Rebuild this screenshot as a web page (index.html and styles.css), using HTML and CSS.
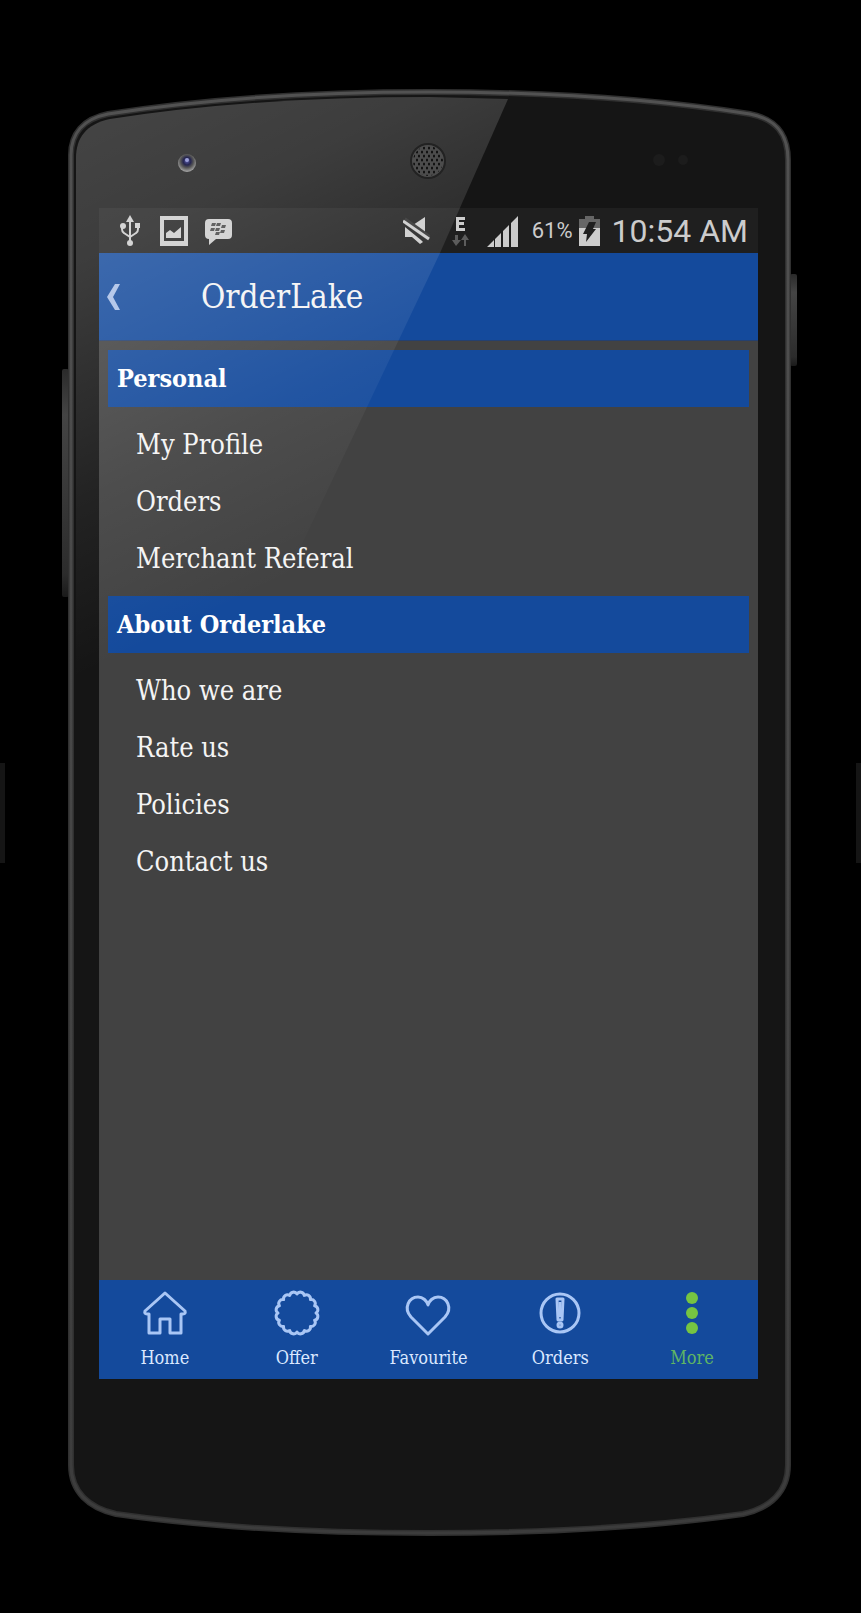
FILE: index.html
```html
<!DOCTYPE html>
<html lang="en">
<head>
    <meta charset="UTF-8">
    <meta name="viewport" content="width=device-width, initial-scale=1">
    <title>OrderLake</title>
    <link rel="stylesheet" href="styles.css">
</head>
<body>
<span class="edge edge-left"></span>
<span class="edge edge-right"></span>
<div class="device">
    <!-- phone body -->
    <svg class="body" viewBox="0 0 723 1446" preserveAspectRatio="none" aria-hidden="true">
        <defs>
            <linearGradient id="rim" x1="0" y1="0" x2="0" y2="1">
                <stop offset="0" stop-color="#525252"/>
                <stop offset="0.5" stop-color="#464646"/>
                <stop offset="1" stop-color="#3c3c3c"/>
            </linearGradient>
            <linearGradient id="key" x1="0" y1="0" x2="0" y2="1">
                <stop offset="0" stop-color="#2a2a2a"/>
                <stop offset="0.2" stop-color="#444"/>
                <stop offset="0.9" stop-color="#2c2c2c"/>
                <stop offset="1" stop-color="#1a1a1a"/>
            </linearGradient>
        </defs>
        <rect x="-6" y="279" width="7" height="228" rx="2" fill="url(#key)"/>
        <rect x="722" y="184" width="7" height="92" rx="2" fill="url(#key)"/>
        <path d="M3 65C3 44 15 29 40 24Q180 2 361 2T682 24C708 29 720 44 720 70V1375C720 1402 702 1418 675 1424Q540 1443 361 1443T48 1424C21 1418 3 1402 3 1375Z" fill="#151515" stroke="#303030" stroke-width="6"/>
        <path d="M3 65C3 44 15 29 40 24Q180 2 361 2T682 24C708 29 720 44 720 70V1375C720 1402 702 1418 675 1424Q540 1443 361 1443T48 1424C21 1418 3 1402 3 1375Z" fill="none" stroke="url(#rim)" stroke-width="3"/>
    </svg>
    <div class="screen">
        <div class="status">
            <svg class="usb" viewBox="0 0 23 32">
                <path d="M10 5v22M10 22l-6-4q-2-1-2-4v-3M10 22l6-4q2-1 2-4v-3" fill="none" stroke="#ccc" stroke-width="2"/>
                <path d="M10 0l4 7H6z"/><circle cx="10" cy="28" r="3"/><circle cx="3" cy="11" r="3"/><path d="M15 8h5v5h-5z"/>
            </svg>
            <svg class="gallery" viewBox="0 0 28 32">
                <path d="M0 1h28v30H0zM4 5v21h20V5z" fill-rule="evenodd"/>
                <path d="M6 23v-5l4-3 4 3 7-6v11z"/>
            </svg>
            <svg class="bbm" viewBox="0 0 27 32">
                <path d="M4 4h19q4 0 4 4v12q0 4-4 4H11l-7 6V24q-4 0-4-4V8q0-4 4-4z"/>
                <path d="M7 8h4l-1 3H6zM12 8h4l-1 3h-4zM6 13h4l-1 3H5zM11 13h4l-1 3h-4zM17 10h4l-1 3h-4zM16 15h4l-1 3h-4zM11 17h4l-1 3h-4z" class="cut"/>
            </svg>
            <svg class="mute" viewBox="0 0 27 32">
                <path d="M2 12l16 13 2 2-3 2-8-7H2zM10 10l12-8v15z"/>
                <path d="M1 5l25 18" stroke="#303030" stroke-width="6"/>
                <path d="M0 6l26 18" stroke="#ccc" stroke-width="3"/>
            </svg>
            <svg class="edge-data" viewBox="0 0 17 32">
                <path d="M4 2h9v3H7v2h5v3H7v3h6v3H4z"/>
                <path d="M3 20h3v5h3l-5 6-4-6h3zM12 31V25H9l4-6 4 6h-3v6z" fill="#5c5c5c"/>
            </svg>
            <svg class="signal" viewBox="0 0 31 32">
                <path d="M0 32l7-7v7zM8 24l6-6v14H8zM16 16l6-6v22h-6zM24 8l7-7v31h-7z"/>
            </svg>
            <span class="percent">61%</span>
            <svg class="battery" viewBox="0 0 21 32">
                <path d="M6 1h9v3h6v9H0V4h6z" fill="#666"/>
                <path d="M0 13h21v18H0z"/>
                <path d="M10 7h7l-3 7h3L7 27l1-8H4z" fill="#1f1f1f"/>
            </svg>
            <span class="clock">10:54 AM</span>
        </div>
        <header class="topbar">
            <a href="#" class="back" aria-label="Back">
                <svg viewBox="0 0 14 28"><path d="M8 1h5L6 14l7 13H8L0 14z"/></svg>
            </a>
            <h1>OrderLake</h1>
        </header>
        <main class="menu">
            <h2>Personal</h2>
            <ul>
                <li><a href="#">My Profile</a></li>
                <li><a href="#">Orders</a></li>
                <li><a href="#">Merchant Referal</a></li>
            </ul>
            <h2>About Orderlake</h2>
            <ul>
                <li><a href="#">Who we are</a></li>
                <li><a href="#">Rate us</a></li>
                <li><a href="#">Policies</a></li>
                <li><a href="#">Contact us</a></li>
            </ul>
        </main>
        <nav class="tabs">
            <a href="#">
                <svg viewBox="0 0 44 44"><path d="M22 2L42 20q1 3-2 3h-2v19H27V28H17v14H6V23H4q-3 0-2-3z"/></svg>
                Home
            </a>
            <a href="#">
                <svg viewBox="0 0 44 44"><path d="M22 3A4 4 0 0 1 29.300 4.400A4 4 0 0 1 35.400 8.600A4 4 0 0 1 39.600 14.700A4 4 0 0 1 41 22A4 4 0 0 1 39.600 29.300A4 4 0 0 1 35.400 35.400A4 4 0 0 1 29.300 39.600A4 4 0 0 1 22 41A4 4 0 0 1 14.700 39.600A4 4 0 0 1 8.600 35.400A4 4 0 0 1 4.400 29.300A4 4 0 0 1 3 22A4 4 0 0 1 4.400 14.700A4 4 0 0 1 8.600 8.600A4 4 0 0 1 14.700 4.400A4 4 0 0 1 22 3z"/></svg>
                Offer
            </a>
            <a href="#">
                <svg viewBox="0 0 44 44"><path d="M22 43L5 26C-3 17 3 6 12 6c5 0 9 4 10 8 1-4 5-8 10-8 9 0 15 11 7 20z"/></svg>
                Favourite
            </a>
            <a href="#">
                <svg viewBox="0 0 44 44"><circle cx="22" cy="22" r="19"/><path d="M19 8h6l-1 21h-4z"/><path d="M22 11v15"/><circle cx="22" cy="34" r="2"/></svg>
                Orders
            </a>
            <a href="#" class="current">
                <svg viewBox="0 0 44 44"><circle cx="22" cy="7" r="6"/><circle cx="22" cy="22" r="6"/><circle cx="22" cy="37" r="6"/></svg>
                More
            </a>
        </nav>
    </div>
    <!-- glass reflection, camera and speaker -->
    <svg class="glass" viewBox="0 0 723 1446" preserveAspectRatio="none" aria-hidden="true">
        <defs>
            <linearGradient id="shine" gradientUnits="userSpaceOnUse" x1="0" y1="0" x2="230" y2="485">
                <stop offset="0" stop-color="#fff" stop-opacity="0.21"/>
                <stop offset="0.3" stop-color="#fff" stop-opacity="0.17"/>
                <stop offset="0.7" stop-color="#fff" stop-opacity="0.06"/>
                <stop offset="1" stop-color="#fff" stop-opacity="0"/>
            </linearGradient>
            <radialGradient id="lens" cx="0.5" cy="0.4" r="0.6">
                <stop offset="0" stop-color="#5558a8"/>
                <stop offset="0.35" stop-color="#26264e"/>
                <stop offset="0.6" stop-color="#555"/>
                <stop offset="1" stop-color="#aaa"/>
            </radialGradient>
            <pattern id="holes" width="5" height="8" patternUnits="userSpaceOnUse">
                <ellipse cx="1" cy="2" rx="1" ry="1.5"/>
                <ellipse cx="4" cy="6" rx="1" ry="1.5"/>
            </pattern>
        </defs>
        <path d="M8 68C8 48 18 34 42 29Q182 7 361 7L440 9 372 163 299 317 155 620H8Z" fill="url(#shine)"/>
        <circle cx="119" cy="73" r="9" fill="url(#lens)"/>
        <circle cx="119" cy="70" r="2" fill="#9ca0d8"/>
        <circle cx="360" cy="71" r="17" fill="#4c4c4c" stroke="#222" stroke-width="2"/>
        <circle cx="360" cy="71" r="15" fill="url(#holes)"/>
        <circle cx="591" cy="70" r="6" fill="#1c1c1c"/>
        <circle cx="615" cy="70" r="5" fill="#1c1c1c"/>
    </svg>
</div>
</body>
</html>
```

FILE: styles.css
```css
* {
    margin: 0;
    padding: 0;
    box-sizing: border-box;
}

body {
    position: relative;
    padding: 90px 70px 77px 68px;
    background-color: #000;
    color: #f4f4f4;
    font-family: "DejaVu Serif Condensed", "DejaVu Serif", serif;
}

a {
    color: inherit;
    text-decoration: none;
}

ul {
    list-style: none;
}

svg {
    display: block;
    fill: #ccc;
}

.edge {
    position: absolute;
    top: 763px;
    width: 5px;
    height: 100px;
    background-color: #151515;
}

.edge-left {
    left: 0;
}

.edge-right {
    right: 0;
}

.device {
    position: relative;
    padding: 118px 33px 157px 31px;
}

.body,
.glass {
    position: absolute;
    top: 0;
    left: 0;
    width: 100%;
    height: 100%;
    overflow: visible;
}

.glass {
    fill: #0c0c0c;
    pointer-events: none;
}

.screen {
    position: relative;
    background-color: #424242;
}

/* status bar */
.status {
    display: flex;
    align-items: center;
    height: 45px;
    padding: 0 10px 0 21px;
    background-color: #1f1f1f;
    color: #ccc;
    font-family: Roboto, sans-serif;
    white-space: nowrap;
}

.status svg {
    flex: none;
    height: 32px;
}

.status .usb {
    width: 23px;
}

.status .gallery {
    width: 28px;
    margin: 0 17px;
}

.status .bbm {
    width: 27px;
    margin-right: auto;
}

.cut {
    fill: #444;
}

.status .mute {
    width: 27px;
}

.status .edge-data {
    width: 17px;
    margin: 0 18px 0 22px;
}

.status .signal {
    width: 31px;
}

.percent {
    margin: 0 6px 0 14px;
    font-size: 22px;
}

.status .battery {
    width: 21px;
}

.clock {
    margin-left: 12px;
    font-size: 32px;
}

/* title bar */
.topbar {
    display: flex;
    align-items: center;
    height: 88px;
    padding-left: 8px;
    background-color: #144a9c;
    border-bottom: 1px solid #25406e;
}

.back {
    width: 94px;
}

.back svg {
    width: 14px;
    height: 28px;
    fill: #a9bfe6;
}

.topbar h1 {
    font-size: 33px;
    font-weight: normal;
}

/* menu */
.menu {
    min-height: 939px;
    padding: 9px;
}

.menu h2 {
    padding-left: 9px;
    background-color: #144a9c;
    color: #fff;
    font-size: 25px;
    line-height: 57px;
}

.menu ul {
    padding: 9px 0 9px 28px;
    font-size: 27px;
    line-height: 57px;
}

.menu li a {
    display: block;
}

/* bottom tabs */
.tabs {
    display: flex;
    height: 99px;
    background-color: #144a9c;
}

.tabs a {
    flex: 1;
    display: flex;
    flex-direction: column;
    align-items: center;
    gap: 11px;
    padding-top: 11px;
    color: #dbe8ff;
    font-size: 18px;
    line-height: 24px;
}

.tabs svg {
    width: 44px;
    height: 44px;
    fill: none;
    stroke: #a9c6f5;
    stroke-width: 3;
    stroke-linejoin: round;
    overflow: visible;
}

.tabs .current {
    color: #5fb564;
}

.tabs .current svg {
    fill: #76c442;
    stroke: none;
}
```
